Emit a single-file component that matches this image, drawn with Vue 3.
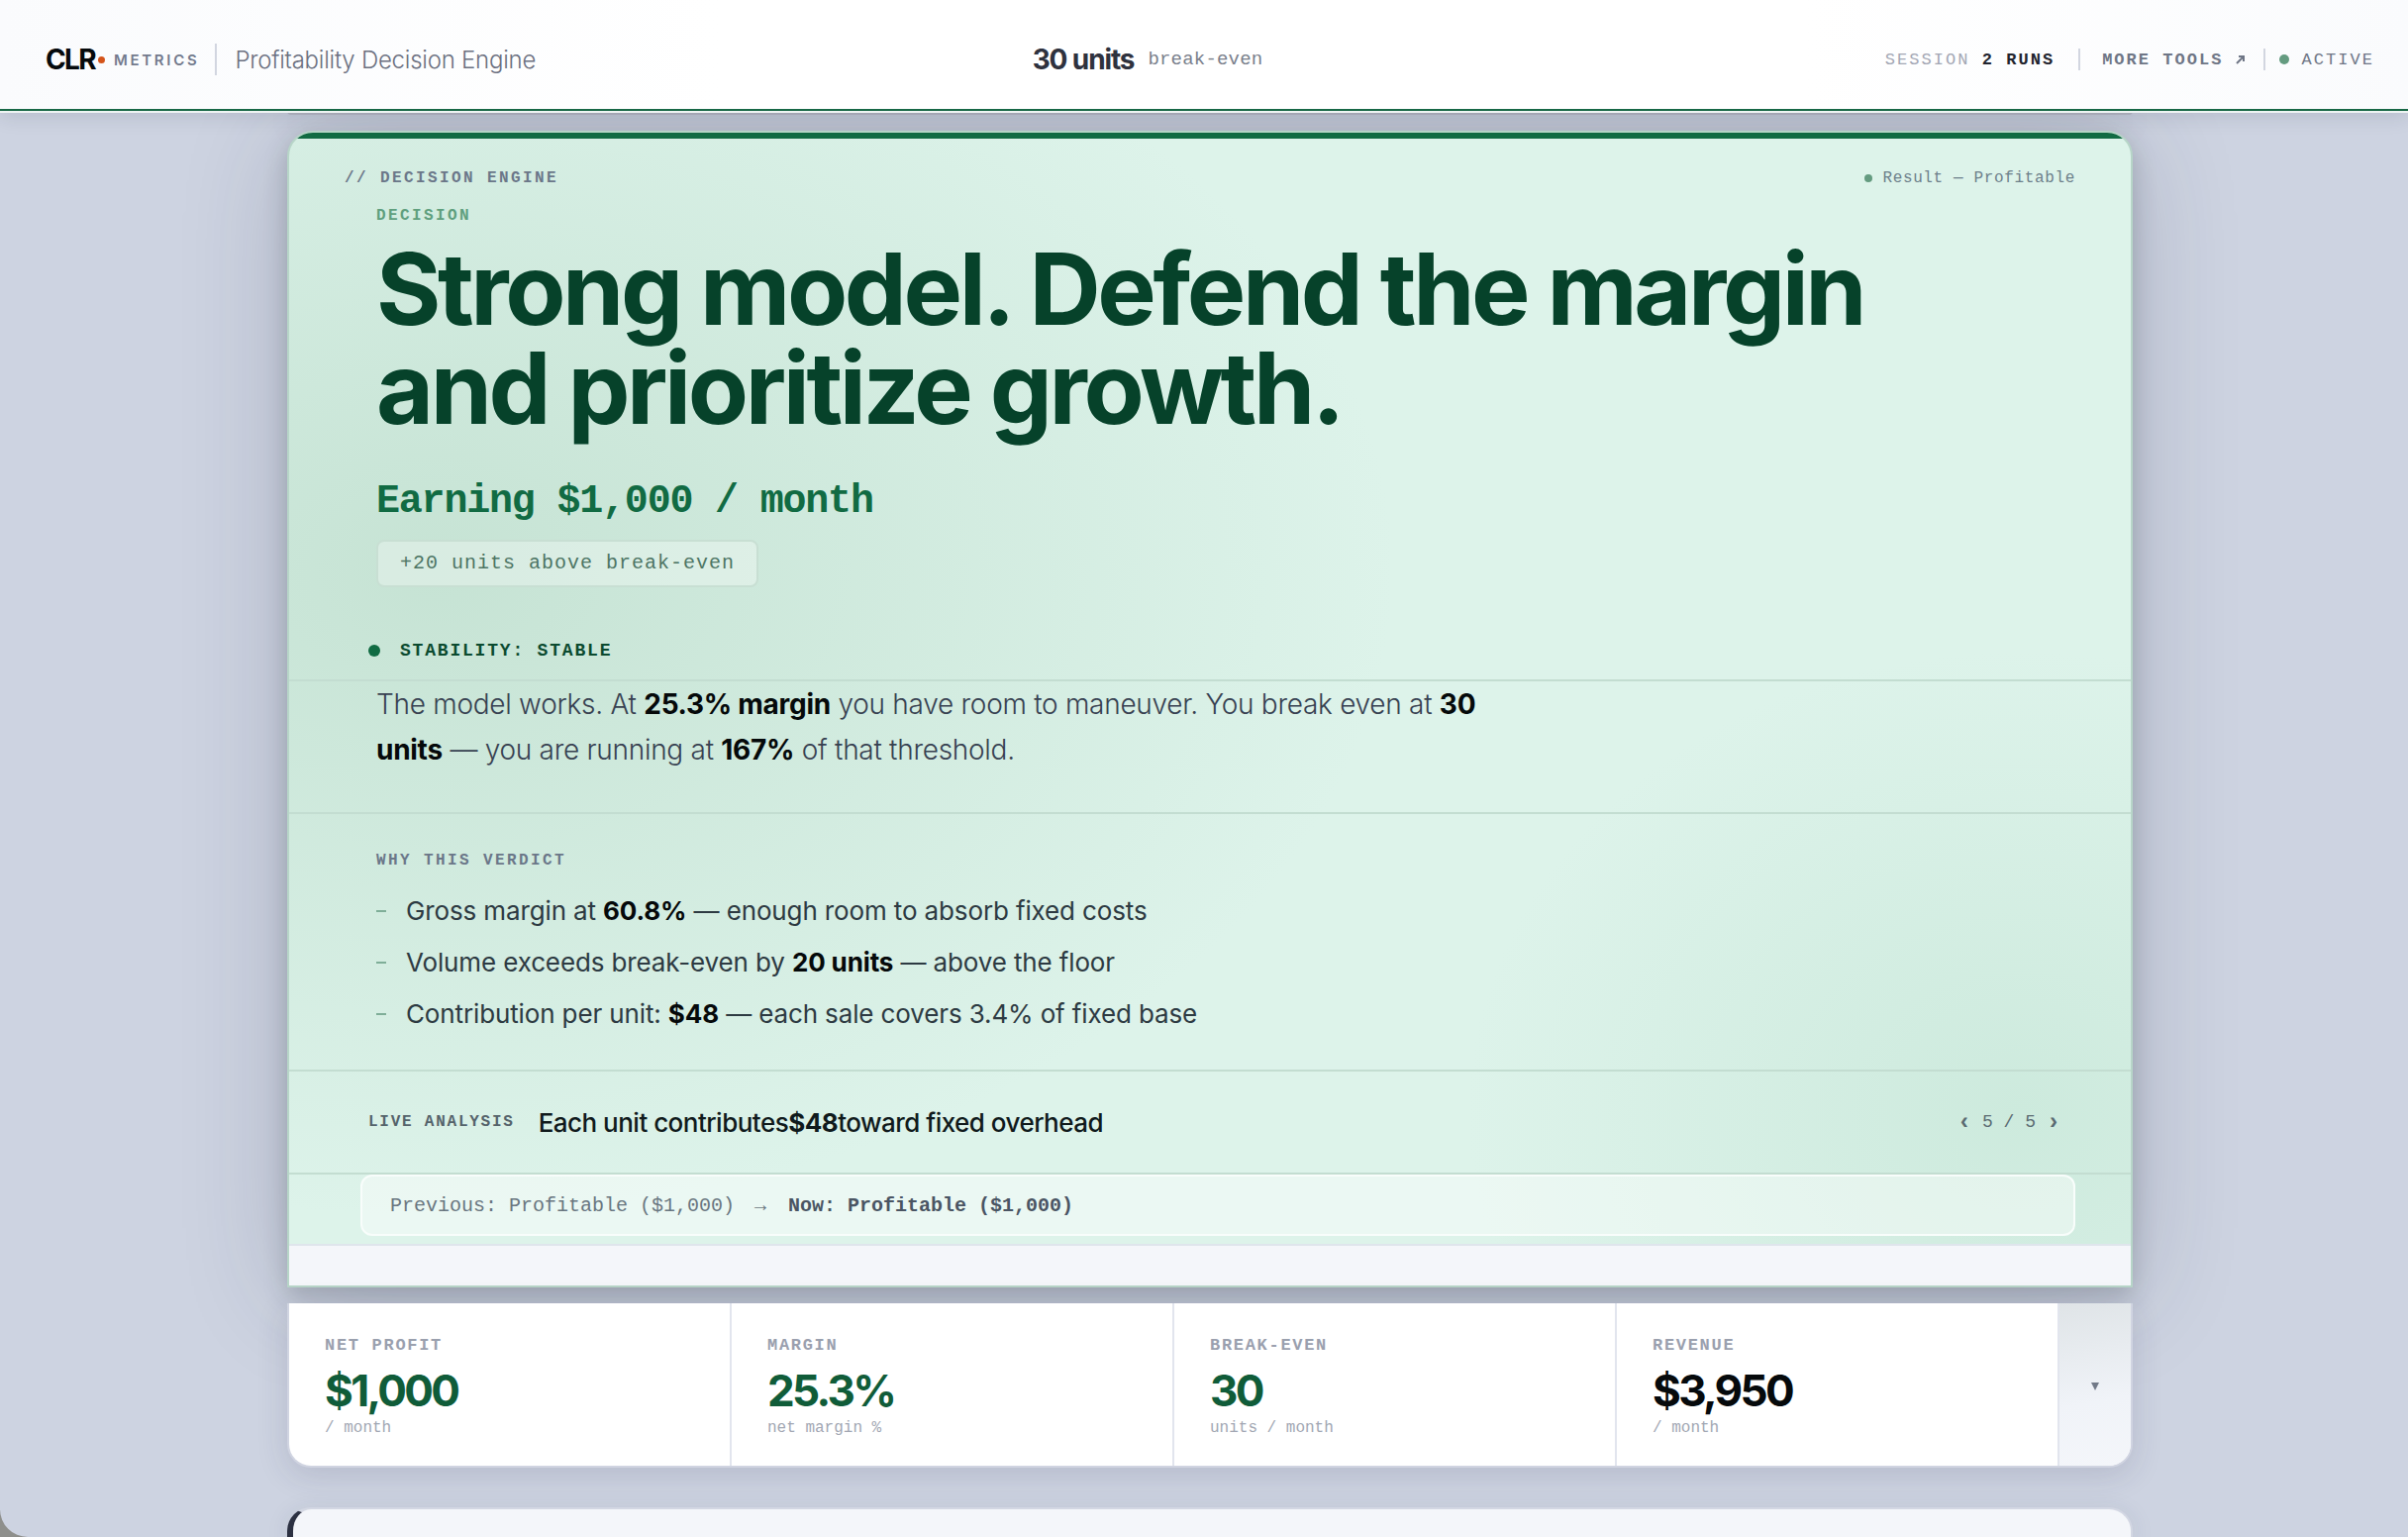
<script setup>
import { ref } from 'vue'

const reasons = [
    { before: 'Gross margin at ', value: '60.8%', after: ' — enough room to absorb fixed costs' },
    { before: 'Volume exceeds break-even by ', value: '20 units', after: ' — above the floor' },
    { before: 'Contribution per unit: ', value: '$48', after: ' — each sale covers 3.4% of fixed base' },
]

const metrics = [
    { label: 'NET PROFIT', value: '$1,000', note: '/ month', good: true },
    { label: 'MARGIN', value: '25.3%', note: 'net margin %', good: true },
    { label: 'BREAK-EVEN', value: '30', note: 'units / month', good: true },
    { label: 'REVENUE', value: '$3,950', note: '/ month', good: false },
]

const total = 5
const current = ref(5)

function step(delta) {
    current.value = Math.min(total, Math.max(1, current.value + delta))
}
</script>

<template>
    <div class="page">
        <header class="topbar">
            <div class="brand">
                <span class="logo">CLR<span class="logoDot"></span></span>
                <span class="logoSub">METRICS</span>
                <span class="rule tall"></span>
                <span class="product">Profitability Decision Engine</span>
            </div>

            <div class="breakEven">
                <strong>30 units</strong>
                <span>break-even</span>
            </div>

            <div class="status">
                <span class="session">SESSION <strong>2 RUNS</strong></span>
                <span class="rule"></span>
                <a href="#" class="tools">MORE TOOLS
                    <svg viewBox="0 0 10 10" aria-hidden="true"><path d="M1 9 8 2M3 2h5v5" /></svg>
                </a>
                <span class="rule"></span>
                <span class="active"><i class="dot"></i>ACTIVE</span>
            </div>
        </header>

        <main class="content">
            <div class="panelAbove"></div>

            <section class="verdict">
                <div class="verdictHead">
                    <span class="eyebrow">// DECISION ENGINE</span>
                    <span class="result"><i class="dot"></i>Result — Profitable</span>
                </div>

                <div class="decision">
                    <p class="eyebrow green">DECISION</p>
                    <h1>Strong model. Defend the margin<br>and prioritize growth.</h1>
                    <p class="earning">Earning $1,000 / month</p>
                    <span class="badge">+20 units above break-even</span>
                </div>

                <p class="stability"><i class="dot"></i>STABILITY: STABLE</p>

                <div class="summary">
                    <p>The model works. At <strong>25.3% margin</strong> you have room to maneuver. You break even at <strong>30 units</strong> — you are running at <strong>167%</strong> of that threshold.</p>
                </div>

                <div class="why">
                    <h2 class="eyebrow">WHY THIS VERDICT</h2>
                    <ul>
                        <li v-for="reason in reasons" :key="reason.value">
                            <span>{{ reason.before }}<strong>{{ reason.value }}</strong>{{ reason.after }}</span>
                        </li>
                    </ul>
                </div>

                <div class="live">
                    <span class="eyebrow dark">LIVE ANALYSIS</span>
                    <p>Each unit contributes<strong>$48</strong>toward fixed overhead</p>
                    <div class="pager">
                        <button type="button" aria-label="Previous" @click="step(-1)">‹</button>
                        <span>{{ current }} / {{ total }}</span>
                        <button type="button" aria-label="Next" @click="step(1)">›</button>
                    </div>
                </div>

                <div class="history">
                    <p>
                        <span>Previous: Profitable ($1,000)</span>
                        <span class="arrow">→</span>
                        <strong>Now: Profitable ($1,000)</strong>
                    </p>
                </div>

                <div class="strip"></div>
            </section>

            <section class="metrics">
                <div class="metric" v-for="metric in metrics" :key="metric.label">
                    <span class="metricLabel">{{ metric.label }}</span>
                    <span class="metricValue" :class="{ good: metric.good }">{{ metric.value }}</span>
                    <span class="metricNote">{{ metric.note }}</span>
                </div>
                <button type="button" class="expand" aria-label="Show details">
                    <svg viewBox="0 0 8 8" aria-hidden="true"><path d="M0 0h8L4 8z" /></svg>
                </button>
            </section>

            <section class="nextPanel"></section>
        </main>
    </div>
</template>

<style>
body {
    background: #8e8f8c;
}
</style>

<style scoped>
.page {
    --sans: Inter, "Open Sans", sans-serif;
    --mono: "Liberation Mono", monospace;
    --line: #c3ddd1;
    display: flex;
    flex-direction: column;
    height: 100vh;
    overflow: hidden;
    border-bottom-left-radius: 28px;
    background: #cdd3e1;
    font-family: var(--sans);
    color: #060a0c;
}
p, h1, h2, ul {
    margin: 0;
    padding: 0;
}
button {
    padding: 0;
    border: 0;
    background: none;
    font: inherit;
    color: inherit;
    cursor: pointer;
}
.dot {
    flex-shrink: 0;
    border-radius: 50%;
    background: #649b80;
}

/* top bar */
.topbar {
    position: relative;
    z-index: 1;
    display: grid;
    grid-template-columns: 1fr auto 1fr;
    align-items: center;
    flex-shrink: 0;
    height: 100px;
    padding: 10px 34px 0 46px;
    border-bottom: 2px solid #186846;
    background: linear-gradient(90deg, #fafbfd, #fff 30%, #fff 75%, #fafbfd);
    box-shadow: 0 2px 0 #eef4f3, 0 4px 20px rgba(30, 35, 60, 0.14);
}
.brand, .breakEven, .status, .active {
    display: flex;
    align-items: center;
}
.logo {
    display: flex;
    align-items: center;
    font-size: 28px;
    font-weight: 700;
    letter-spacing: -0.06em;
}
.logoDot {
    width: 7px;
    height: 7px;
    margin-left: 3px;
    border-radius: 50%;
    background: #d4541a;
}
.logoSub {
    margin-left: 9px;
    font-size: 15px;
    font-weight: 600;
    letter-spacing: 0.18em;
    color: #737a8d;
}
.rule {
    width: 2px;
    height: 22px;
    background: #d2d6e0;
}
.rule.tall {
    height: 32px;
    margin: 0 18px 0 16px;
}
.product {
    font-size: 24px;
    font-weight: 300;
    letter-spacing: -0.01em;
    color: #6b7080;
}
.breakEven {
    gap: 14px;
    padding-right: 126px;
    font-family: var(--mono);
    font-size: 19px;
    letter-spacing: 0.01em;
    color: #7a7f8c;
}
.breakEven strong {
    font-family: var(--sans);
    font-size: 28px;
    letter-spacing: -0.04em;
    color: #2f323e;
}
.status {
    justify-content: flex-end;
    font-family: var(--mono);
    font-size: 17px;
    letter-spacing: 0.12em;
    color: #6f7686;
}
.session {
    margin-right: 24px;
    color: #a3a7b4;
}
.session strong {
    color: #22242e;
}
.tools {
    display: flex;
    align-items: center;
    gap: 12px;
    margin: 0 18px 0 22px;
    font-weight: 700;
    text-decoration: none;
    color: #6f7686;
}
.tools svg {
    width: 10px;
    height: 10px;
    fill: none;
    stroke: currentColor;
    stroke-width: 2;
}
.active {
    gap: 13px;
    margin-left: 14px;
}
.active .dot {
    width: 10px;
    height: 10px;
}

/* column */
.content {
    display: flex;
    flex: 1;
    flex-direction: column;
    min-height: 0;
    width: calc(100% - 568px);
    margin: 0 auto;
    padding-left: 12px;
}
.panelAbove {
    flex-shrink: 0;
    height: 4px;
    margin-bottom: 16px;
    border-radius: 0 0 20px 20px;
    background: #b9bcc8;
    box-shadow: 0 8px 40px rgba(30, 35, 50, 0.2);
}
.verdict {
    flex-shrink: 0;
    border: 2px solid #b7d5c8;
    border-radius: 26px 26px 0 0;
    background:
        linear-gradient(#116b43, #116b43) 0 0 / 100% 6px no-repeat,
        radial-gradient(ellipse 52% 56% at 8% 38%, #c6e3d4, rgba(198, 227, 212, 0)),
        radial-gradient(ellipse 30% 40% at 94% 85%, #cdeadd, rgba(205, 234, 221, 0)),
        #ddf3ea;
    box-shadow: 0 8px 24px rgba(30, 45, 50, 0.22), 0 8px 110px rgba(40, 45, 70, 0.2);
    overflow: hidden;
}
.verdictHead {
    display: flex;
    align-items: center;
    justify-content: space-between;
    padding: 35px 56px 0;
    line-height: 22px;
}
.eyebrow {
    font-family: var(--mono);
    font-size: 16px;
    font-weight: 700;
    line-height: 22px;
    letter-spacing: 0.15em;
    color: #6b7789;
}
.eyebrow.green {
    color: #5f9f7e;
}
.eyebrow.dark {
    letter-spacing: 0.11em;
    color: #55636b;
}
.result {
    display: flex;
    align-items: center;
    gap: 10px;
    font-family: var(--mono);
    font-size: 16px;
    letter-spacing: 0.04em;
    color: #6d808a;
}
.result .dot {
    width: 8px;
    height: 8px;
}
.decision {
    padding: 16px 88px 0;
}
h1 {
    margin-top: 13px;
    font-size: 100px;
    font-weight: 700;
    line-height: 100px;
    letter-spacing: -0.034em;
    color: #06422a;
}
.earning {
    margin-top: 41px;
    font-family: var(--mono);
    font-size: 40px;
    font-weight: 700;
    line-height: 48px;
    letter-spacing: -0.03em;
    color: #116b43;
}
.badge {
    display: inline-block;
    margin-top: 14px;
    padding: 0 22px;
    border: 2px solid #c8dfd3;
    border-radius: 8px;
    background: rgba(255, 255, 255, 0.32);
    font-family: var(--mono);
    font-size: 20px;
    line-height: 44px;
    letter-spacing: 0.05em;
    color: #4d7564;
}
.stability {
    display: flex;
    align-items: center;
    gap: 20px;
    padding: 52px 80px 17px;
    font-family: var(--mono);
    font-size: 18px;
    font-weight: 700;
    line-height: 24px;
    letter-spacing: 0.1em;
    color: #0b4a2f;
}
.stability .dot {
    width: 12px;
    height: 12px;
    background: #116b43;
}
.summary, .why, .live, .history {
    border-top: 2px solid var(--line);
}
.summary {
    padding: 0 88px 40px;
    font-size: 28px;
    font-weight: 300;
    line-height: 46px;
    letter-spacing: -0.01em;
    color: #374151;
}
.summary p {
    max-width: 1130px;
}
.summary strong, .why strong {
    font-weight: 700;
    color: #05090a;
}
.why {
    padding: 36px 88px 30px;
}
.why ul {
    margin-top: 14px;
    list-style: none;
    font-size: 26px;
    line-height: 52px;
    letter-spacing: -0.005em;
    color: #2d3a42;
}
.why li {
    display: flex;
    align-items: center;
    gap: 20px;
}
.why li::before {
    content: "";
    width: 10px;
    height: 2px;
    background: #7fae98;
}
.live {
    display: flex;
    align-items: center;
    gap: 24px;
    height: 102px;
    padding: 0 70px 0 80px;
}
.live p {
    flex: 1;
    font-size: 26px;
    font-weight: 500;
    letter-spacing: -0.02em;
    color: #101a1c;
}
.pager {
    display: flex;
    align-items: center;
    gap: 10px;
    font-family: var(--mono);
    font-size: 18px;
    color: #5b6b72;
}
.pager button {
    width: 16px;
    font-size: 24px;
    font-weight: 700;
}
.history {
    padding: 0 56px 8px 72px;
}
.history p {
    display: flex;
    align-items: center;
    gap: 20px;
    height: 58px;
    padding: 0 28px;
    border: 2px solid #f8fdfb;
    border-radius: 12px;
    background: rgba(255, 255, 255, 0.42);
    font-family: var(--mono);
    font-size: 20px;
    color: #697680;
}
.history strong {
    color: #4a5563;
}
.history .arrow {
    width: 14px;
}
.strip {
    height: 40px;
    border-top: 2px solid #dfe5ec;
    background: #f4f6fa;
}

/* metric row */
.metrics {
    position: relative;
    display: flex;
    flex-shrink: 0;
    height: 164px;
    margin-top: 16px;
    border: 2px solid #d0d4e1;
    border-top: 0;
    border-radius: 0 0 24px 24px;
    background: #fff;
    box-shadow: 0 8px 32px rgba(40, 45, 80, 0.14);
    overflow: hidden;
}
.metric {
    display: flex;
    flex: 1;
    flex-direction: column;
    padding: 32px 36px 0;
    border-right: 2px solid #e2e5ee;
    font-family: var(--mono);
    font-size: 16px;
    color: #a2a7b3;
}
.metricLabel {
    font-size: 17px;
    font-weight: 700;
    line-height: 22px;
    letter-spacing: 0.1em;
    color: #9aa0ae;
}
.metricValue {
    margin-top: 8px;
    font-family: var(--sans);
    font-size: 44px;
    font-weight: 700;
    line-height: 52px;
    letter-spacing: -0.06em;
    color: #060a0c;
}
.metricValue.good {
    color: #105c39;
}
.metricNote {
    margin-top: 1px;
    line-height: 22px;
}
.expand {
    width: 72px;
    background: linear-gradient(170deg, #dfe4e7, #f0f3f8 60%, #f4f6fa);
    color: #727a88;
}
.expand svg {
    width: 8px;
    height: 8px;
    fill: currentColor;
}

.nextPanel {
    flex: 1;
    margin-top: 40px;
    border: 2px solid #d3d7e3;
    border-bottom: 0;
    border-left: 6px solid #2c3142;
    border-radius: 24px 24px 0 0;
    background: #f4f6fa;
    box-shadow: 0 4px 24px rgba(40, 45, 80, 0.1);
}
</style>
